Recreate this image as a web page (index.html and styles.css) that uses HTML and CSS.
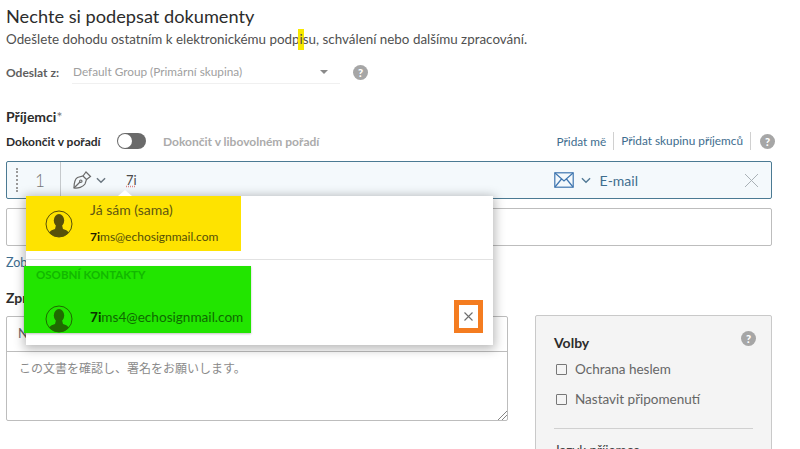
FILE: index.html
```html
<!DOCTYPE html>
<html lang="cs">
<head>
<meta charset="utf-8">
<title>Nechte si podepsat dokumenty</title>
<link rel="stylesheet" href="styles.css">
</head>
<body>
<main class="page">
  <h1 class="title">Nechte si podepsat dokumenty</h1>
  <p class="subtitle">Odešlete dohodu ostatním k elektronickému podp<span class="mark">i</span>su, schválení nebo dalšímu zpracování.</p>

  <div class="from-row">
    <span class="from-label">Odeslat z:</span>
    <div class="select"><span>Default Group (Primární skupina)</span><i class="caret"></i></div>
    <span class="help from-help">?</span>
  </div>

  <div class="heading">Příjemci<span class="star">*</span></div>
  <div class="order-row">
    <span class="order-on">Dokončit v pořadí</span>
    <span class="toggle"><i class="knob"></i></span>
    <span class="order-off">Dokončit v libovolném pořadí</span>
    <div class="links">
      <a class="link">Přidat mě</a><a class="link sep">Přidat skupinu příjemců</a>
      <span class="help">?</span>
    </div>
  </div>

  <div class="recipients">
    <div class="recipient active">
      <div class="num"><i class="grip"></i><span>1</span></div>
      <div class="role">
        <svg width="20" height="18" viewBox="0 0 20 18" fill="none" stroke="#6b6b6b" stroke-width="1.2"><path d="M1 17 C1 12 2 8 4.5 6.5 L10 5 L13.5 8.5 L12 13 C10 16 5 17.5 1 17Z"/><path d="M1 17 L7 11"/><circle cx="7.8" cy="10.2" r="1.2"/><path d="M10 5 L13 1 L17.5 5.5 L13.5 8.5"/></svg>
        <svg class="chev" width="10" height="7" viewBox="0 0 11 7" fill="none" stroke="#6b7780" stroke-width="1.6"><path d="M1 1 L5.5 5.5 L10 1"/></svg>
      </div>
      <div class="typed">7i</div>
      <div class="method">
        <svg width="20" height="16" viewBox="0 0 20 16" fill="none" stroke="#3f76b0" stroke-width="1.2"><rect x="0.8" y="0.8" width="18.4" height="14.4"/><path d="M1 1 L10 9 L19 1 M1 15 L7.5 7 M19 15 L12.5 7"/></svg>
        <svg class="chev" width="10" height="7" viewBox="0 0 11 7" fill="none" stroke="#527a96" stroke-width="1.5"><path d="M1 1 L5.5 5.5 L10 1"/></svg>
        <span class="method-text">E-mail</span>
      </div>
      <svg class="close" width="15" height="15" viewBox="0 0 15 15" stroke="#a9b1b6" stroke-width="1"><path d="M1 1 L14 14 M14 1 L1 14"/></svg>
    </div>
    <div class="recipient empty"></div>

    <div class="popup">
      <i class="notch"></i>
      <div class="me-block">
        <div class="avatar"><svg width="28" height="28" viewBox="0 0 28 28"><use href="#person"/></svg></div>
        <div class="me-text">
          <div class="me-name">Já sám (sama)</div>
          <div class="me-mail"><b>7i</b>ms@echosignmail.com</div>
        </div>
      </div>
      <div class="popup-line"></div>
      <div class="contact-block">
        <div class="contact-head">OSOBNÍ KONTAKTY</div>
        <div class="contact-row">
          <div class="avatar"><svg width="28" height="28" viewBox="0 0 28 28"><use href="#person"/></svg></div>
          <div class="contact-mail"><b>7i</b>ms4@echosignmail.com</div>
        </div>
      </div>
      <div class="remove"><svg width="9" height="9" viewBox="0 0 9 9" stroke="#6e6e6e" stroke-width="1.1"><path d="M0.5 0.5 L8.5 8.5 M8.5 0.5 L0.5 8.5"/></svg></div>
    </div>
  </div>

  <a class="show-link">Zobrazit kopii</a>

  <div class="lower">
    <div class="message">
      <div class="heading msg-head">Zpráva</div>
      <div class="msg-box">
        <div class="msg-name">Název dohody</div>
        <div class="msg-body">この文書を確認し、署名をお願いします。
          <svg class="resize" width="10" height="10" viewBox="0 0 10 10" stroke="#777" stroke-width="0.9"><path d="M1 10 L10 1 M5 10 L10 5"/></svg>
        </div>
      </div>
    </div>
    <aside class="options">
      <div class="options-head"><span>Volby</span><span class="help">?</span></div>
      <div class="check"><i class="box"></i>Ochrana heslem</div>
      <div class="check"><i class="box"></i>Nastavit připomenutí</div>
      <div class="options-line"></div>
      <div class="options-more">Jazyk příjemce</div>
    </aside>
  </div>
</main>
<svg class="defs" width="0" height="0">
  <defs>
    <g id="person">
      <clipPath id="round"><circle cx="14" cy="14" r="13"/></clipPath>
      <circle cx="14" cy="14" r="13" fill="none" stroke="currentColor" stroke-width="1"/>
      <g clip-path="url(#round)" fill="currentColor">
        <ellipse cx="14" cy="10.5" rx="5.2" ry="6.5"/>
        <path d="M11 15 L17 15 L18 19 C22 20 25 22 26 28 L2 28 C3 22 6 20 10 19Z"/>
      </g>
    </g>
  </defs>
</svg>
</body>
</html>
```

FILE: styles.css
```css
* { box-sizing: border-box; }
html, body { margin: 0; height: 449px; overflow: hidden; background: #fff; }
body { font-family: Lato, "Noto Sans CJK JP", sans-serif; color: #4b4b4b; }
.page { padding: 5px 28px 0 6px; width: 800px; }
.title { margin: 0; font-size: 18.2px; line-height: 22px; font-weight: 400; color: #2c2c2c; }
.subtitle { margin: 2px 0 0; font-size: 13.4px; line-height: 20px; color: #505050; white-space: nowrap; }
.mark { background: #f8e800; display: inline-block; line-height: 21px; padding: 0 1.5px; margin: 0 -1.5px; }
.from-row { display: flex; align-items: center; margin-top: 10px; height: 24px; }
.from-label { font-size: 12px; font-weight: 700; color: #5f5f5f; width: 66px; }
.select { width: 268px; height: 24px; display: flex; align-items: center; justify-content: space-between; padding: 0 12px 0 1px; font-size: 11.8px; color: #a0a0a0; border-bottom: 1px solid #f0f0f0; }
.caret { width: 0; height: 0; border: 4px solid transparent; border-top: 4px solid #8a8a8a; border-bottom: 0; }
.help { width: 15px; height: 15px; border-radius: 50%; background: #a6a6a6; color: #fff; font-size: 11px; font-weight: 900; line-height: 15px; text-align: center; flex: none; }
.from-help { margin-left: 13px; }
.heading { font-size: 14px; font-weight: 700; color: #2c2c2c; line-height: 18px; }
.star { font-weight: 400; color: #777; }
.page > .heading { margin-top: 24px; }
.order-row { display: flex; align-items: center; height: 22px; margin-top: 4px; font-size: 12px; font-weight: 700; }
.order-on { color: #2c2c2c; width: 111px; white-space: nowrap; }
.toggle { width: 29px; height: 16px; border-radius: 8px; background: #6a6a6a; padding: 1px; display: flex; flex: none; }
.knob { width: 14px; height: 14px; border-radius: 50%; background: #fff; }
.order-off { color: #ababab; margin-left: 17px; }
.links { margin-left: auto; display: flex; align-items: center; font-weight: 400; margin-right: -3px; }
.link { color: #3e6d8e; font-size: 11.8px; }
.sep { border-left: 1px solid #d0d0d0; border-right: 1px solid #d0d0d0; margin-left: 7px; padding: 0 7px; line-height: 18px; }
.links .help { margin-left: 9px; }
.recipients { position: relative; margin-top: 9px; }
.recipient { height: 38px; border: 1px solid #bdbdbd; border-radius: 2px; width: 766px; display: flex; align-items: center; }
.active { border-color: #4b7a93; background: #f4f9fc; }
.empty { margin-top: 9px; background: #fff; }
.num { width: 54px; height: 100%; border-right: 1px solid #c5c9cc; display: flex; align-items: center; color: #777; font-size: 17px; font-weight: 300; padding-left: 9px; }
.grip { width: 2px; height: 24px; border-left: 2px dotted #9a9a9a; margin-right: 17px; }
.role { display: flex; align-items: center; gap: 3px; margin-left: 12px; width: 53px; }
.typed { font-size: 13px; color: #4b4b4b; text-decoration: underline dotted #d88; }
.method { margin-left: auto; display: flex; align-items: center; gap: 7px; }
.method-text { color: #3e6d8e; font-size: 14px; margin-left: 2px; }
.close { margin: 0 12px 0 106px; }
.popup { position: absolute; left: 20px; top: 35px; width: 467px; height: 149px; background: #fff; box-shadow: 0 2px 10px 2px rgba(0,0,0,.28); z-index: 2; }
.notch { position: absolute; left: 92px; top: -6px; width: 0; height: 0; border: 7px solid transparent; border-top: 0; border-bottom: 6px solid #fff; }
.me-block { width: 215px; height: 55px; background: #fee300; display: flex; padding: 14px 0 0 19px; color: #57500a; }
.avatar { width: 28px; height: 28px; flex: none; }
.me-text { margin-left: 17px; margin-top: -10px; }
.me-name { font-size: 14px; line-height: 20px; color: #5e5712; }
.me-mail { font-size: 12px; line-height: 20px; margin-top: 7px; color: #544f08; white-space: nowrap; }
.me-mail b { color: #1c1c00; font-weight: 700; }
.popup-line { height: 1px; background: #e2e2e2; margin-top: 8px; }
.contact-block { width: 227px; height: 67px; margin: 6px 0 0 -2px; background: #22e500; box-shadow: 0 1px 2px rgba(0,0,0,.25); padding: 2px 0 0 12px; color: #1f6a00; }
.contact-head { font-size: 11.5px; font-weight: 700; color: #12b800; line-height: 13px; }
.contact-row { display: flex; align-items: center; margin: 22px 0 0 9px; }
.contact-mail { font-size: 13.6px; color: #0e6a00; margin-left: 17px; white-space: nowrap; }
.contact-mail b { color: #0c3000; font-weight: 700; }
.contact-row svg { margin-top: 2px; }
.remove { position: absolute; left: 428px; top: 104px; width: 29px; height: 33px; border: 5px solid #f47c20; background: #fff; display: flex; align-items: center; justify-content: center; }
.show-link { display: block; font-size: 12.5px; color: #3e6d8e; line-height: 16px; margin-top: 9px; }
.lower { display: flex; align-items: flex-start; margin-top: 18px; }
.message { width: 502px; }
.msg-head { margin-top: 0; line-height: 18px; }
.msg-box { height: 105px; margin-top: 9px; border: 1px solid #bdbdbd; border-radius: 2px; display: flex; flex-direction: column; }
.msg-name { height: 35px; border-bottom: 1px solid #bdbdbd; font-size: 13px; color: #666; padding: 8px 11px; flex: none; }
.msg-body { position: relative; flex: 1; padding: 7px 12px; font-size: 12px; color: #8a8a8a; }
.resize { position: absolute; right: 0; bottom: 0; }
.options { width: 237px; height: 200px; margin: 26px 0 0 27px; border: 1px solid #c9c9c9; border-radius: 2px; background: #f4f4f4; padding: 14px 15px 14px 18px; flex: none; }
.options-head { display: flex; justify-content: space-between; font-size: 14px; font-weight: 700; color: #2c2c2c; height: 24px; align-items: center; }
.options-head .help { margin: -8px 0 0 0; }
.check { display: flex; align-items: center; height: 30px; font-size: 13.5px; color: #666; }
.box { width: 11px; height: 11px; border: 1.5px solid #777; margin: 0 8px 0 2px; border-radius: 1px; }
.options-line { height: 1px; background: #d0d0d0; margin: 14px 3px 0 0; }
.options-more { font-size: 13.5px; color: #444; margin-top: 13px; }
.defs { position: absolute; }
```
